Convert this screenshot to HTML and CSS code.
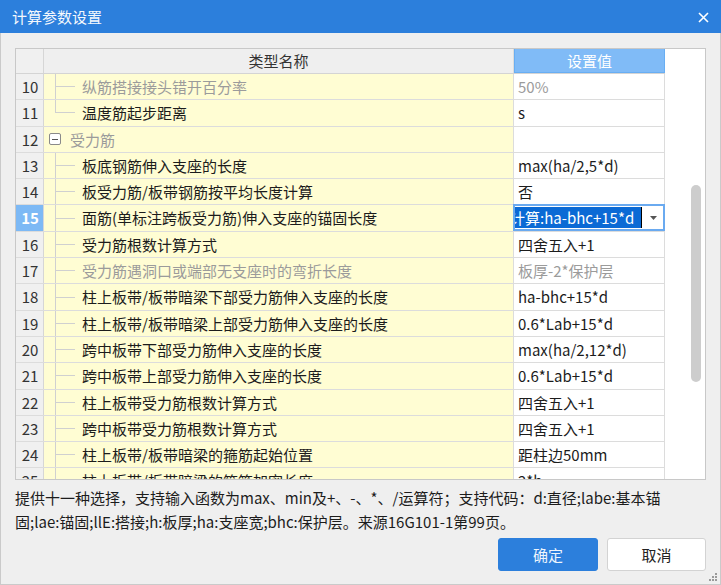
FILE: index.html
```html
<!DOCTYPE html>
<html lang="zh">
<head>
<meta charset="utf-8">
<title>计算参数设置</title>
<link rel="stylesheet" href="styles.css">
</head>
<body>
<div class="window">
  <div class="titlebar">
    <span class="title">计算参数设置</span>
    <svg class="close" width="11" height="11" viewBox="0 0 11 11"><path d="M1 1L10 10M10 1L1 10" stroke="#fff" stroke-width="1.6" fill="none"/></svg>
  </div>
  <div class="body">
    <div class="grid">
      <div class="cols">
        <div class="row head">
          <div class="num"></div>
          <div class="name center">类型名称</div>
          <div class="val center">设置值</div>
        </div>
        <div class="row">
          <div class="num">10</div>
          <div class="name"><span class="branch"></span><span class="dim">纵筋搭接接头错开百分率</span></div>
          <div class="val dim">50%</div>
        </div>
        <div class="row">
          <div class="num">11</div>
          <div class="name"><span class="branch last"></span>温度筋起步距离</div>
          <div class="val">s</div>
        </div>
        <div class="row">
          <div class="num">12</div>
          <div class="name group"><span class="toggle"></span><span class="dim">受力筋</span></div>
          <div class="val"></div>
        </div>
        <div class="row">
          <div class="num">13</div>
          <div class="name"><span class="branch"></span>板底钢筋伸入支座的长度</div>
          <div class="val">max(ha/2,5*d)</div>
        </div>
        <div class="row">
          <div class="num">14</div>
          <div class="name"><span class="branch"></span>板受力筋/板带钢筋按平均长度计算</div>
          <div class="val">否</div>
        </div>
        <div class="row">
          <div class="num current">15</div>
          <div class="name"><span class="branch"></span>面筋(单标注跨板受力筋)伸入支座的锚固长度</div>
          <div class="val editing">
            <div class="editor">
              <span class="sel"><span class="seltext">计算:ha-bhc+15*d</span></span><span class="caret"></span>
              <svg class="drop" width="7" height="4" viewBox="0 0 7 4"><path d="M0 0H7L3.5 4Z" fill="#555"/></svg>
            </div>
          </div>
        </div>
        <div class="row">
          <div class="num">16</div>
          <div class="name"><span class="branch"></span>受力筋根数计算方式</div>
          <div class="val">四舍五入+1</div>
        </div>
        <div class="row">
          <div class="num">17</div>
          <div class="name"><span class="branch"></span><span class="dim">受力筋遇洞口或端部无支座时的弯折长度</span></div>
          <div class="val dim">板厚-2*保护层</div>
        </div>
        <div class="row">
          <div class="num">18</div>
          <div class="name"><span class="branch"></span>柱上板带/板带暗梁下部受力筋伸入支座的长度</div>
          <div class="val">ha-bhc+15*d</div>
        </div>
        <div class="row">
          <div class="num">19</div>
          <div class="name"><span class="branch"></span>柱上板带/板带暗梁上部受力筋伸入支座的长度</div>
          <div class="val">0.6*Lab+15*d</div>
        </div>
        <div class="row">
          <div class="num">20</div>
          <div class="name"><span class="branch"></span>跨中板带下部受力筋伸入支座的长度</div>
          <div class="val">max(ha/2,12*d)</div>
        </div>
        <div class="row">
          <div class="num">21</div>
          <div class="name"><span class="branch"></span>跨中板带上部受力筋伸入支座的长度</div>
          <div class="val">0.6*Lab+15*d</div>
        </div>
        <div class="row">
          <div class="num">22</div>
          <div class="name"><span class="branch"></span>柱上板带受力筋根数计算方式</div>
          <div class="val">四舍五入+1</div>
        </div>
        <div class="row">
          <div class="num">23</div>
          <div class="name"><span class="branch"></span>跨中板带受力筋根数计算方式</div>
          <div class="val">四舍五入+1</div>
        </div>
        <div class="row">
          <div class="num">24</div>
          <div class="name"><span class="branch"></span>柱上板带/板带暗梁的箍筋起始位置</div>
          <div class="val">距柱边50mm</div>
        </div>
        <div class="row">
          <div class="num">25</div>
          <div class="name"><span class="branch"></span>柱上板带/板带暗梁的箍筋加密长度</div>
          <div class="val">2*h</div>
        </div>
      </div>
      <div class="scroll"><div class="thumb"></div></div>
    </div>
    <p class="desc">提供十一种选择，支持输入函数为max、min及+、-、*、/运算符；支持代码：d:直径;labe:基本锚<br>固;lae:锚固;llE:搭接;h:板厚;ha:支座宽;bhc:保护层。来源16G101-1第99页。</p>
    <div class="actions">
      <button class="btn primary">确定</button>
      <button class="btn">取消</button>
    </div>
    <svg class="grip" width="9" height="9" viewBox="0 0 9 9">
      <rect x="6" y="0" width="2" height="2" fill="#9a9a9a"/>
      <rect x="3" y="3" width="2" height="2" fill="#9a9a9a"/>
      <rect x="6" y="3" width="2" height="2" fill="#9a9a9a"/>
      <rect x="0" y="6" width="2" height="2" fill="#9a9a9a"/>
      <rect x="3" y="6" width="2" height="2" fill="#9a9a9a"/>
      <rect x="6" y="6" width="2" height="2" fill="#9a9a9a"/>
    </svg>
  </div>
</div>
</body>
</html>
```

FILE: styles.css
```css
* { box-sizing: border-box; }
html, body { margin: 0; padding: 0; }
body {
  width: 721px;
  height: 585px;
  overflow: hidden;
  background: #efefef;
  font-family: "Noto Sans CJK SC", "Liberation Sans", sans-serif;
  font-size: 15px;
  color: #1c1c1c;
}
.window {
  height: 585px;
  display: flex;
  flex-direction: column;
}
.titlebar {
  height: 33px;
  flex: none;
  background: #2c7fdc;
  color: #f4f8fd;
  display: flex;
  align-items: center;
  justify-content: space-between;
  padding: 0 12px 0 12px;
  font-size: 15px;
}
.close { margin-top: 1px; }
.body {
  flex: 1;
  position: relative;
  border: 1px solid #cacaca;
  border-top: 0;
  padding: 15px 14px 0 14px;
  display: flex;
  flex-direction: column;
}
.grid {
  height: 432px;
  flex: none;
  display: flex;
  border: 1px solid #c8c8c8;
  background: #fff;
}
.cols {
  width: 649px;
  flex: none;
  display: flex;
  flex-direction: column;
  overflow: hidden;
}
.row {
  display: flex;
  flex: none;
  height: 26.3px;
  line-height: 25px;
  border-bottom: 1px solid #dcdcdc;
}
.row.head { height: 25px; line-height: 24px; border-bottom-color: #d4d4d4; }
.num {
  width: 28px;
  flex: none;
  background: #f0f0f0;
  border-right: 1px solid #d6d6d6;
  text-align: center;
  color: #333;
  padding-left: 1px;
}
.num.current {
  background: #7db9f5;
  color: #fff;
  font-weight: bold;
}
.name {
  width: 470px;
  flex: none;
  background: #fffdd3;
  border-right: 1px solid #dcdcdc;
  display: flex;
  align-items: stretch;
  white-space: nowrap;
  overflow: hidden;
  color: #1c1c1c;
}
.head .name {
  background: #efefef;
  justify-content: center;
  color: #333;
}
.val {
  width: 151px;
  flex: none;
  background: #fff;
  border-right: 1px solid #dcdcdc;
  padding-left: 4px;
  white-space: nowrap;
  overflow: hidden;
}
.head .val {
  background: #80bbf7;
  border: 1px solid #68aef3;
  border-top: 0;
  color: #fff;
  text-align: center;
  padding-left: 0;
}
.dim { color: #9b9b9b; }
.branch {
  width: 27px;
  flex: none;
  margin-left: 11px;
  background:
    linear-gradient(#d0d0d0, #d0d0d0) left top / 1px 100% no-repeat,
    linear-gradient(#d0d0d0, #d0d0d0) left center / 20px 1px no-repeat;
}
.branch.last {
  background:
    linear-gradient(#d0d0d0, #d0d0d0) left top / 1px 50% no-repeat,
    linear-gradient(#d0d0d0, #d0d0d0) left center / 20px 1px no-repeat;
}
.toggle {
  width: 12px;
  height: 12px;
  flex: none;
  align-self: center;
  margin: 0 9px 0 5px;
  border: 1px solid #8a8a8a;
  border-radius: 2px;
  background: linear-gradient(#555, #555) center / 6px 1px no-repeat, #fff;
}
.val.editing {
  padding: 0;
  border-right: 0;
  overflow: visible;
}
.editor {
  height: 27px;
  margin-top: -1px;
  margin-left: -1px;
  width: 152px;
  border: 2px solid #6aaaf0;
  background: #fff;
  display: flex;
  align-items: center;
  overflow: hidden;
}
.sel {
  width: 126px;
  flex: none;
  height: 21px;
  line-height: 21px;
  background: #0b6ad5;
  color: #fff;
  overflow: hidden;
  white-space: nowrap;
}
.seltext { display: inline-block; margin-left: -5px; }
.caret {
  width: 1px;
  height: 21px;
  flex: none;
  background: #000;
}
.drop { margin-left: 8px; }
.scroll {
  flex: 1;
  padding: 136px 0 0 26px;
}
.thumb {
  width: 10px;
  height: 197px;
  border-radius: 5px;
  background: #cdcdcd;
}
.desc {
  margin: 6px 0 0 0;
  line-height: 24px;
  font-size: 15px;
  color: #1c1c1c;
  white-space: nowrap;
}
.actions {
  display: flex;
  justify-content: flex-end;
  gap: 9px;
  margin-top: 4px;
}
.btn {
  width: 99px;
  height: 33px;
  border-radius: 3px;
  font-family: inherit;
  font-size: 15px;
  border: 1px solid #d3d3d3;
  background: #fff;
  color: #222;
  padding: 0;
}
.btn.primary {
  width: 100px;
  background: #2c7fdc;
  border-color: #2c7fdc;
  color: #eef5fd;
}
.grip {
  position: absolute;
  right: 2px;
  bottom: 2px;
}
```
